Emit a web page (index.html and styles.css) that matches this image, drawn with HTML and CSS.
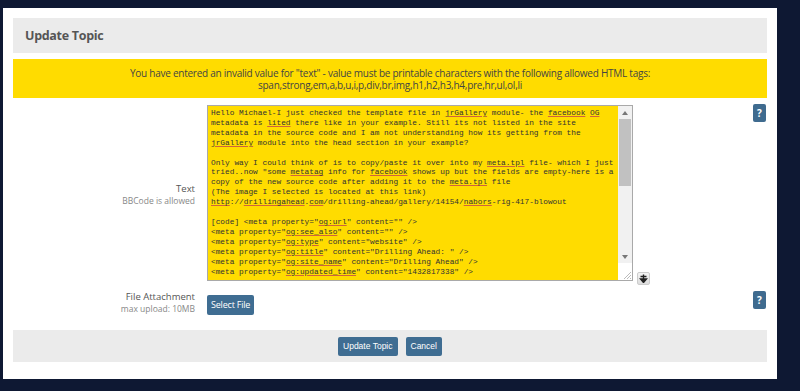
FILE: index.html
```html
<!DOCTYPE html>
<html lang="en">
<head>
  <meta charset="UTF-8">
  <meta name="viewport" content="width=device-width, initial-scale=1.0">
  <title>Update Topic</title>
  <link rel="stylesheet" href="styles.css">
</head>
<body>
  <div class="modal">
    <div class="modal-title">Update Topic</div>

    <div class="notice">
      You have entered an invalid value for "text" - value must be printable characters with the following allowed HTML tags:<br>
      span,strong,em,a,b,u,i,p,div,br,img,h1,h2,h3,h4,pre,hr,ul,ol,li
    </div>

    <div class="form-row">
      <div class="label">
        <span class="label-main">Text</span>
        <span class="label-sub">BBCode is allowed</span>
      </div>
      <div class="field">
        <div class="textarea">
          <div class="textarea-text">Hello Michael-I just checked the template file in <u>jrGallery</u> module- the <u>facebook</u> <u>OG</u>
metadata is <u>lited</u> there like in your example. Still its not listed in the site
metadata in the source code and I am not understanding how its getting from the
<u>jrGallery</u> module into the head section in your example?

Only way I could think of is to copy/paste it over into my <u>meta.tpl</u> file- which I just
tried..now "some <u>metatag</u> info for <u>facebook</u> shows up but the fields are empty-here is a
copy of the new source code after adding it to the <u>meta.tpl</u> file
(The image I selected is located at this link)
<u>http</u>://<u>drillingahead</u>.<u>com</u>/drilling-ahead/gallery/14154/<u>nabors</u>-rig-417-blowout

[code] &lt;meta property="<u>og:url</u>" content="" /&gt;
&lt;meta property="<u>og:see_also</u>" content="" /&gt;
&lt;meta property="<u>og:type</u>" content="website" /&gt;
&lt;meta property="<u>og:title</u>" content="Drilling Ahead: " /&gt;
&lt;meta property="<u>og:site_name</u>" content="Drilling Ahead" /&gt;
&lt;meta property="<u>og:updated_time</u>" content="1432817338" /&gt;</div>
          <div class="scrollbar">
            <div class="scroll-arrow">
              <svg viewBox="0 0 6 4" width="6" height="4"><polygon points="3 0 6 4 0 4"/></svg>
            </div>
            <div class="scroll-track"><div class="scroll-thumb"></div></div>
            <div class="scroll-arrow">
              <svg viewBox="0 0 6 4" width="6" height="4"><polygon points="0 0 6 0 3 4"/></svg>
            </div>
            <div class="scroll-corner">
              <svg viewBox="0 0 8 8" width="8" height="8"><path d="M1 8 L8 1 M4 8 L8 4 M7 8 L8 7"/></svg>
            </div>
          </div>
        </div>
        <div class="expand-btn">
          <svg viewBox="0 0 9 9" width="9" height="9"><path d="M1.5 2.5 H7.5 M4.5 0.5 V5.5" /><polygon points="1.5 5 7.5 5 4.5 8.5"/></svg>
        </div>
      </div>
      <div class="help-btn">?</div>
    </div>

    <div class="form-row file-row">
      <div class="label">
        <span class="label-main">File Attachment</span>
        <span class="label-sub">max upload: 10MB</span>
      </div>
      <div class="field">
        <div class="btn select-btn">Select File</div>
      </div>
      <div class="help-btn">?</div>
    </div>

    <div class="modal-footer">
      <div class="btn">Update Topic</div>
      <div class="btn">Cancel</div>
    </div>
  </div>
</body>
</html>
```

FILE: styles.css
```css
body {
  margin: 0;
  padding: 8px 23px 0 3px;
  height: 391px;
  box-sizing: border-box;
  overflow: hidden;
  background-color: #0e1833;
  font-family: "Open Sans", "Liberation Sans", sans-serif;
}

.modal {
  background: #fff;
  height: 371px;
  box-sizing: border-box;
  padding: 10px 10px 0 10px;
}

.modal-title {
  background: #ebebeb;
  height: 35px;
  padding-left: 12px;
  display: flex;
  align-items: center;
  font-size: 12.5px;
  font-weight: bold;
  color: #555;
  letter-spacing: -0.3px;
}

.notice {
  margin-top: 6px;
  height: 39px;
  box-sizing: border-box;
  padding-top: 8px;
  background: #ffdc00;
  color: #444;
  text-align: center;
  font-size: 10px;
  line-height: 12px;
  letter-spacing: -0.25px;
}

/** Form rows **/

.form-row {
  display: grid;
  grid-template-columns: 182px 1fr 13px;
  column-gap: 12px;
  padding-right: 1px;
  margin-top: 6px;
}

.label {
  display: flex;
  flex-direction: column;
  align-items: flex-end;
  justify-content: center;
  text-align: right;
  line-height: 12px;
}

.label-main {
  font-size: 9.5px;
  color: #555;
}

.label-sub {
  font-size: 8.5px;
  color: #888;
}

.field {
  display: flex;
  align-items: flex-end;
}

.textarea {
  display: flex;
  width: 426px;
  height: 176px;
  margin: 1px 0 4px 0;
  box-sizing: border-box;
  border: 1px solid #a9a9a9;
  background: #ffdc00;
}

.textarea-text {
  flex: 1;
  overflow: hidden;
  padding: 3px 3px 0 3px;
  font-family: "Liberation Mono", monospace;
  font-size: 7.8px;
  line-height: 9.9px;
  color: #333;
  white-space: pre;
}

.textarea-text u {
  text-decoration: underline solid #d0643c;
  text-decoration-thickness: 1px;
  text-underline-offset: 1px;
}

.scrollbar {
  width: 14px;
  display: flex;
  flex-direction: column;
  background: #f1f1f1;
}

.scroll-arrow {
  height: 13px;
  display: flex;
  align-items: center;
  justify-content: center;
  fill: #777;
}

.scroll-track {
  flex: 1;
  padding: 0 1px;
}

.scroll-thumb {
  height: 67px;
  background: #c1c1c1;
}

.scroll-corner {
  height: 17px;
  background: #fff;
  display: flex;
  align-items: flex-end;
  justify-content: flex-end;
  padding: 0 1px 1px 0;
  box-sizing: border-box;
  stroke: #aaa;
  stroke-width: 0.8;
}

.expand-btn {
  width: 13px;
  height: 13px;
  margin-left: 4px;
  box-sizing: border-box;
  border: 1px solid #ccc;
  border-radius: 2px;
  background: linear-gradient(#f4f4f4, #dcdcdc);
  display: flex;
  align-items: center;
  justify-content: center;
}

.expand-btn svg {
  stroke: #222;
  stroke-width: 1.4;
  fill: #222;
}

.help-btn {
  align-self: start;
  height: 18px;
  background: #3f6b8f;
  color: #fff;
  border-radius: 2px;
  font-size: 10px;
  font-weight: bold;
  display: flex;
  align-items: center;
  justify-content: center;
}

.file-row .field {
  align-items: center;
  padding-top: 3px;
}

.btn {
  background: #3f6d92;
  color: #fff;
  border-radius: 2px;
  font-family: "Liberation Sans", sans-serif;
  font-size: 8.5px;
  height: 19px;
  padding: 0 5px;
  display: flex;
  align-items: center;
}

.select-btn {
  height: 20px;
  padding: 0 4px;
  font-family: "Open Sans", sans-serif;
  font-size: 9px;
  letter-spacing: -0.2px;
}

.modal-footer {
  margin-top: 15px;
  height: 32px;
  background: #ebebeb;
  display: flex;
  align-items: center;
  justify-content: center;
  gap: 8px;
}
```
